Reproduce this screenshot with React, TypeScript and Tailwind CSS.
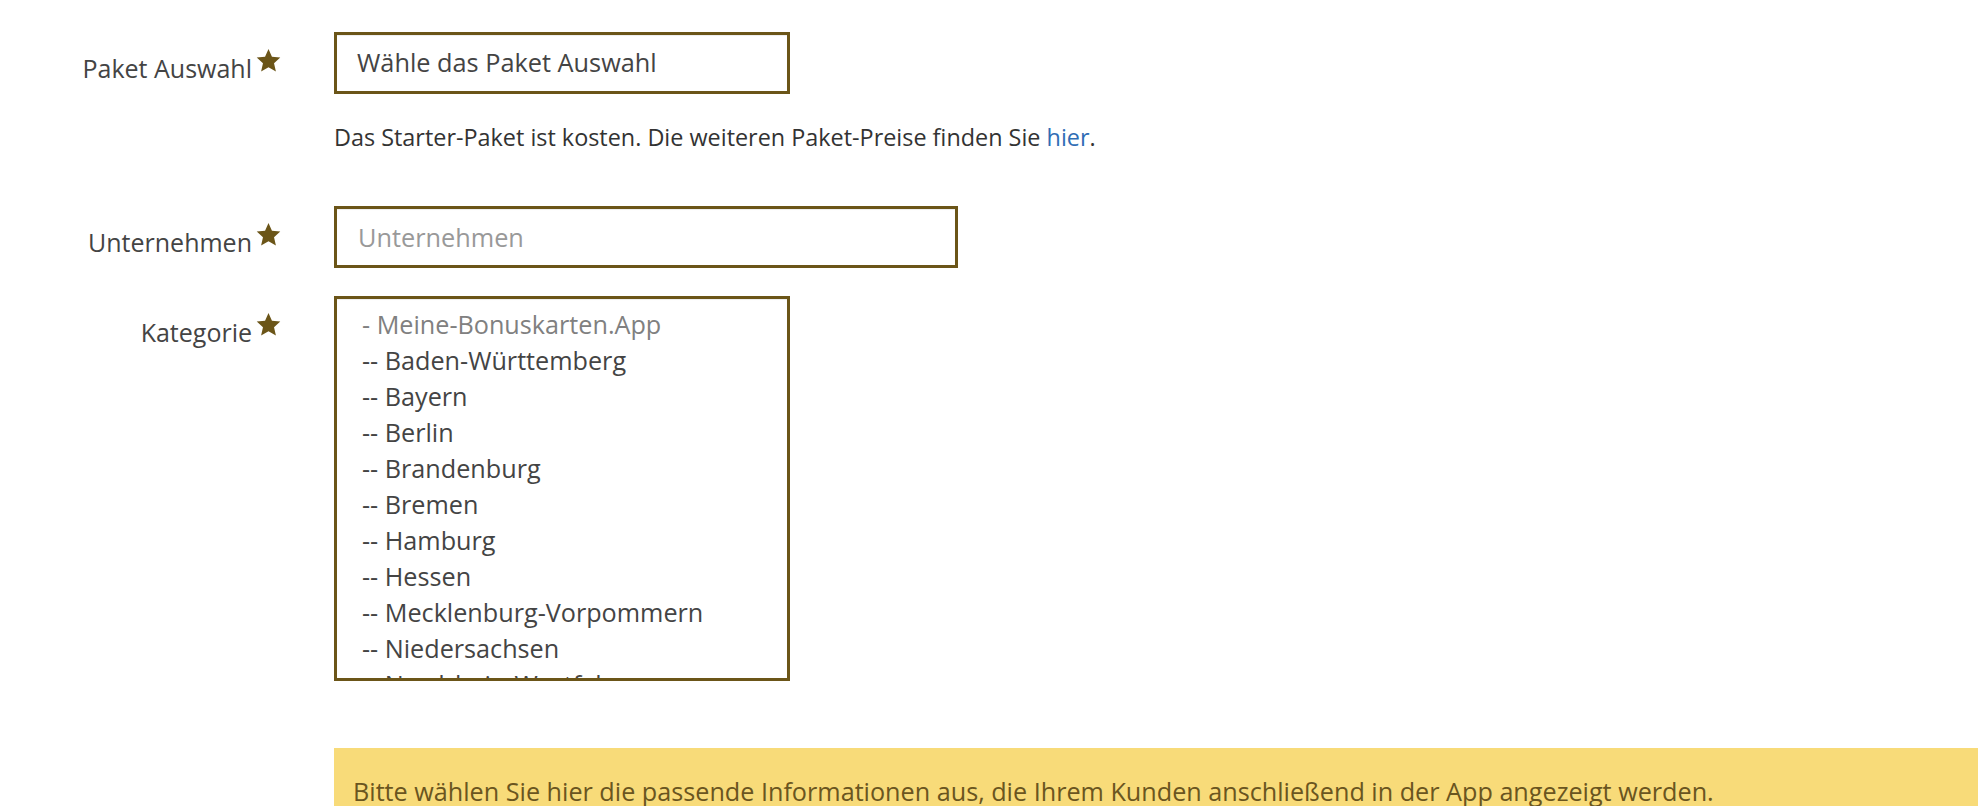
import type { ReactNode } from 'react'

const regions = [
  'Baden-Württemberg',
  'Bayern',
  'Berlin',
  'Brandenburg',
  'Bremen',
  'Hamburg',
  'Hessen',
  'Mecklenburg-Vorpommern',
  'Niedersachsen',
  'Nordrhein-Westfalen',
  'Rheinland-Pfalz',
]

function Star() {
  return (
    <svg viewBox="0 0 24 24" className="ml-[4px] mt-[-3px] h-[25px] w-[25px] shrink-0 fill-[#6b5518]">
      <path d="M12 1l3.3 7.4 8 .8-6 5.4 1.8 7.9L12 18.4l-7.1 4.1 1.8-7.9-6-5.4 8-.8z" />
    </svg>
  )
}

// Label column — right-aligned, star sits slightly raised after the text
function FieldLabel({ children }: { children: ReactNode }) {
  return (
    <div className="flex items-start justify-end pr-[53px] pt-[19px] text-[25px] leading-[34px] text-[#444]">
      <span>{children}</span>
      <Star />
    </div>
  )
}

export default function App() {
  return (
    <div className="min-h-[806px] bg-white font-['Open_Sans',sans-serif]">
      <div className="grid grid-cols-[334px_1fr] pt-[32px]">
        <FieldLabel>Paket Auswahl</FieldLabel>
        <div>
          <div className="flex h-[62px] w-[456px] items-center border-[3px] border-[#6b5518] pl-[20px] text-[25.3px] text-[#444] shadow-[inset_0_1px_1px_rgba(0,0,0,0.075)]">
            Wähle das Paket Auswahl
          </div>
          <p className="mt-[28px] text-[23.4px] leading-[30px] text-[#333]">
            Das Starter-Paket ist kosten. Die weiteren Paket-Preise finden Sie{' '}
            <a className="text-[#2f6db5]">hier</a>.
          </p>
        </div>

        <div className="mt-[54px]">
          <FieldLabel>Unternehmen</FieldLabel>
        </div>
        <div className="mt-[54px]">
          <input
            placeholder="Unternehmen"
            className="h-[62px] w-[624px] border-[3px] border-[#6b5518] pl-[21px] text-[25.3px] text-[#444] shadow-[inset_0_1px_1px_rgba(0,0,0,0.075)] outline-none placeholder:text-[#999]"
          />
        </div>

        <div className="mt-[28px]">
          <FieldLabel>Kategorie</FieldLabel>
        </div>
        <div className="mt-[28px]">
          <div className="h-[385px] w-[456px] overflow-hidden border-[3px] border-[#6b5518] pl-[25px] pt-[7px] text-[25.2px] leading-[36px] text-[#444] shadow-[inset_0_1px_1px_rgba(0,0,0,0.075)]">
            <div className="text-[#808080]">- Meine-Bonuskarten.App</div>
            {regions.map((r) => (
              <div key={r}>-- {r}</div>
            ))}
          </div>
        </div>

        <div />
        <div className="mt-[67px] h-[58px] overflow-hidden bg-[#f8db79] pl-[19px] pt-[27px] text-[25.2px] leading-[32px] text-[#6a5520]">
          Bitte wählen Sie hier die passende Informationen aus, die Ihrem Kunden anschließend in der App angezeigt werden.
        </div>
      </div>
    </div>
  )
}
